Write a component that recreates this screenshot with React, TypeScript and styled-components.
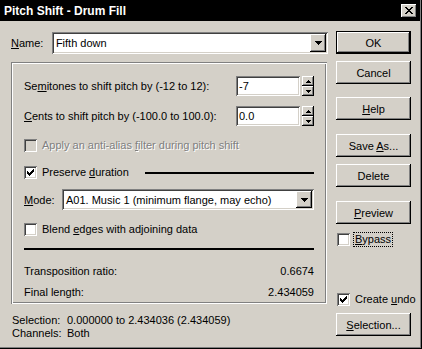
import React from 'react';
import styled, { createGlobalStyle, css } from 'styled-components';

const face = '#d4d0c8';

const GlobalStyle = createGlobalStyle`
  html, body {
    margin: 0;
    padding: 0;
    background: ${face};
  }
  body {
    font-family: "Liberation Sans", Arial, sans-serif;
    font-size: 11px;
    color: #000;
  }
  * {
    box-sizing: border-box;
  }
`;

const raised = css`
  background: ${face};
  box-shadow: inset -1px -1px #000, inset 1px 1px #fff, inset -2px -2px #808080, inset 2px 2px ${face};
`;

const sunken = css`
  box-shadow: inset 1px 1px #808080, inset -1px -1px #fff, inset 2px 2px #404040, inset -2px -2px ${face};
`;

const Window = styled.div`
  width: 422px;
  height: 349px;
  padding: 0 2px 2px 0;
  background: ${face};
  box-shadow: inset -1px -1px #000, inset -2px -2px #808080;
  display: flex;
  flex-direction: column;
`;

const TitleBar = styled.div`
  height: 21px;
  flex: none;
  background: #000;
  color: #fff;
  display: flex;
  align-items: center;
  justify-content: space-between;
  padding: 0 3px 0 4px;
  font-weight: bold;
  font-size: 12px;
`;

const CloseButton = styled.div`
  ${raised}
  width: 16px;
  height: 14px;
  display: flex;
  align-items: center;
  justify-content: center;
`;

const Body = styled.div`
  display: flex;
  padding-left: 11px;
  flex: 1;
`;

const MainColumn = styled.div`
  width: 317px;
  padding-top: 11px;
  display: flex;
  flex-direction: column;
`;

const SideColumn = styled.div`
  margin-left: 8px;
  padding-top: 10px;
  width: 75px;
  display: flex;
  flex-direction: column;
`;

const NameRow = styled.div`
  display: flex;
  align-items: center;
  height: 22px;
`;

const NameLabel = styled.span`
  width: 41px;
`;

const Combo = styled.div<{ $width: number; $height: number }>`
  ${sunken}
  background: #fff;
  width: ${({ $width }) => $width}px;
  height: ${({ $height }) => $height}px;
  padding: 2px;
  display: flex;
  align-items: center;
`;

const ComboText = styled.span`
  flex: 1;
  padding-left: 2px;
  white-space: nowrap;
`;

const ArrowButton = styled.span<{ $height: number }>`
  ${raised}
  width: 16px;
  height: ${({ $height }) => $height}px;
  display: flex;
  align-items: center;
  justify-content: center;
`;

const GroupBox = styled.div`
  margin-top: 8px;
  width: 316px;
  height: 242px;
  padding: 14px 13px 0 13px;
  box-shadow: inset 1px 1px #808080, inset -1px -1px #fff, inset 2px 2px #fff, inset -2px -2px #808080;
  display: flex;
  flex-direction: column;
`;

const Row = styled.div<{ $top: number; $h: number; $spread?: boolean }>`
  display: flex;
  align-items: center;
  justify-content: ${({ $spread }) => ($spread ? 'space-between' : 'flex-start')};
  height: ${({ $h }) => $h}px;
  margin-top: ${({ $top }) => $top}px;
  white-space: nowrap;
`;

const SpinGroup = styled.div`
  display: flex;
  align-items: center;
`;

const TextField = styled.div`
  ${sunken}
  background: #fff;
  width: 64px;
  height: 20px;
  padding: 2px 0 0 3px;
  line-height: 16px;
`;

const Spinner = styled.div`
  width: 12px;
  height: 20px;
  margin-left: 2px;
  display: flex;
  flex-direction: column;
`;

const SpinButton = styled.div`
  ${raised}
  flex: 1;
  display: flex;
  align-items: center;
  justify-content: center;
`;

const CheckBox = styled.span<{ $disabled?: boolean }>`
  ${sunken}
  width: 13px;
  height: 13px;
  flex: none;
  background: ${({ $disabled }) => ($disabled ? face : '#fff')};
  display: inline-flex;
  align-items: center;
  justify-content: center;
`;

const CheckLabel = styled.span<{ $disabled?: boolean; $focus?: boolean }>`
  margin-left: ${({ $focus }) => ($focus ? 4 : 5)}px;
  color: ${({ $disabled }) => ($disabled ? '#808080' : '#000')};
  text-shadow: ${({ $disabled }) => ($disabled ? '1px 1px #fff' : 'none')};
  outline: ${({ $focus }) => ($focus ? '1px dotted #000' : 'none')};
  padding: ${({ $focus }) => ($focus ? '0 1px' : '0')};
  line-height: 13px;
`;

const HeadingRule = styled.div`
  flex: 1;
  height: 2px;
  margin-left: 16px;
  background: #000;
`;

const Separator = styled.div`
  height: 2px;
  margin-top: 12px;
  background: #000;
  flex: none;
`;

const ModeLabel = styled.span`
  width: 38px;
`;

const InfoGrid = styled.div`
  display: grid;
  grid-template-columns: 55px auto;
  line-height: 13px;
  margin-top: 10px;
  padding-left: 1px;
  white-space: nowrap;
`;

const Button = styled.div<{ $top: number; $default?: boolean }>`
  ${raised}
  width: 75px;
  height: 23px;
  flex: none;
  margin-top: ${({ $top }) => $top}px;
  border: ${({ $default }) => ($default ? '1px solid #000' : 'none')};
  display: flex;
  align-items: center;
  justify-content: center;
`;

const SideCheckRow = styled.div<{ $top: number }>`
  display: flex;
  align-items: center;
  height: 13px;
  margin-top: ${({ $top }) => $top}px;
  padding-left: 1px;
  white-space: nowrap;
`;

const DownArrow = () => (
  <svg width="7" height="4" viewBox="0 0 7 4" shapeRendering="crispEdges">
    <path d="M0 0h7v1H0zM1 1h5v1H1zM2 2h3v1H2zM3 3h1v1H3z" fill="#000" />
  </svg>
);

const SmallArrow = ({ up }: { up?: boolean }) => (
  <svg width="5" height="3" viewBox="0 0 5 3" shapeRendering="crispEdges">
    <path
      d={up ? 'M2 0h1v1H2zM1 1h3v1H1zM0 2h5v1H0z' : 'M0 0h5v1H0zM1 1h3v1H1zM2 2h1v1H2z'}
      fill="#000"
    />
  </svg>
);

const CheckMark = () => (
  <svg width="7" height="7" viewBox="0 0 7 7" shapeRendering="crispEdges">
    <path
      d="M0 2h1v3H0zM1 3h1v3H1zM2 4h1v3H2zM3 3h1v3H3zM4 2h1v3H4zM5 1h1v3H5zM6 0h1v3H6z"
      fill="#000"
    />
  </svg>
);

const CloseGlyph = () => (
  <svg width="8" height="7" viewBox="0 0 8 7" shapeRendering="crispEdges">
    <path
      d="M0 0h2v1H0zM6 0h2v1H6zM1 1h2v1H1zM5 1h2v1H5zM2 2h4v1H2zM3 3h2v1H3zM2 4h4v1H2zM1 5h2v1H1zM5 5h2v1H5zM0 6h2v1H0zM6 6h2v1H6z"
      fill="#000"
    />
  </svg>
);

const Check = ({ checked, disabled }: { checked?: boolean; disabled?: boolean }) => (
  <CheckBox $disabled={disabled}>{checked && <CheckMark />}</CheckBox>
);

const SpinField = ({ value }: { value: string }) => (
  <SpinGroup>
    <TextField>{value}</TextField>
    <Spinner>
      <SpinButton>
        <SmallArrow up />
      </SpinButton>
      <SpinButton>
        <SmallArrow />
      </SpinButton>
    </Spinner>
  </SpinGroup>
);

const App: React.FC = () => {
  return (
    <>
      <GlobalStyle />
      <Window>
        <TitleBar>
          <span>Pitch Shift - Drum Fill</span>
          <CloseButton>
            <CloseGlyph />
          </CloseButton>
        </TitleBar>
        <Body>
          <MainColumn>
            <NameRow>
              <NameLabel>
                <u>N</u>ame:
              </NameLabel>
              <Combo $width={277} $height={22}>
                <ComboText>Fifth down</ComboText>
                <ArrowButton $height={18}>
                  <DownArrow />
                </ArrowButton>
              </Combo>
            </NameRow>

            <GroupBox>
              <Row $top={0} $h={20} $spread>
                <span>
                  Se<u>m</u>itones to shift pitch by (-12 to 12):
                </span>
                <SpinField value="-7" />
              </Row>
              <Row $top={10} $h={20} $spread>
                <span>
                  <u>C</u>ents to shift pitch by (-100.0 to 100.0):
                </span>
                <SpinField value="0.0" />
              </Row>
              <Row $top={13} $h={13}>
                <Check disabled />
                <CheckLabel $disabled>
                  Apply an anti-alias <u>f</u>ilter during pitch shift
                </CheckLabel>
              </Row>
              <Row $top={14} $h={13}>
                <Check checked />
                <CheckLabel>
                  Preserve <u>d</u>uration
                </CheckLabel>
                <HeadingRule />
              </Row>
              <Row $top={10} $h={21}>
                <ModeLabel>
                  <u>M</u>ode:
                </ModeLabel>
                <Combo $width={252} $height={21}>
                  <ComboText>A01. Music 1 (minimum flange, may echo)</ComboText>
                  <ArrowButton $height={17}>
                    <DownArrow />
                  </ArrowButton>
                </Combo>
              </Row>
              <Row $top={13} $h={13}>
                <Check />
                <CheckLabel>
                  Blend <u>e</u>dges with adjoining data
                </CheckLabel>
              </Row>
              <Separator />
              <Row $top={14} $h={13} $spread>
                <span>Transposition ratio:</span>
                <span>0.6674</span>
              </Row>
              <Row $top={8} $h={13} $spread>
                <span>Final length:</span>
                <span>2.434059</span>
              </Row>
            </GroupBox>

            <InfoGrid>
              <span>Selection:</span>
              <span>0.000000 to 2.434036 (2.434059)</span>
              <span>Channels:</span>
              <span>Both</span>
            </InfoGrid>
          </MainColumn>

          <SideColumn>
            <Button $top={0} $default>
              OK
            </Button>
            <Button $top={7}>Cancel</Button>
            <Button $top={13}>
              <span>
                <u>H</u>elp
              </span>
            </Button>
            <Button $top={14}>
              <span>
                Save <u>A</u>s...
              </span>
            </Button>
            <Button $top={7}>Delete</Button>
            <Button $top={14}>
              <span>
                <u>P</u>review
              </span>
            </Button>
            <SideCheckRow $top={9}>
              <Check />
              <CheckLabel $focus>
                <u>B</u>ypass
              </CheckLabel>
            </SideCheckRow>
            <SideCheckRow $top={47}>
              <Check checked />
              <CheckLabel>
                Create <u>u</u>ndo
              </CheckLabel>
            </SideCheckRow>
            <Button $top={7}>
              <span>
                <u>S</u>election...
              </span>
            </Button>
          </SideColumn>
        </Body>
      </Window>
    </>
  );
};

export default App;
